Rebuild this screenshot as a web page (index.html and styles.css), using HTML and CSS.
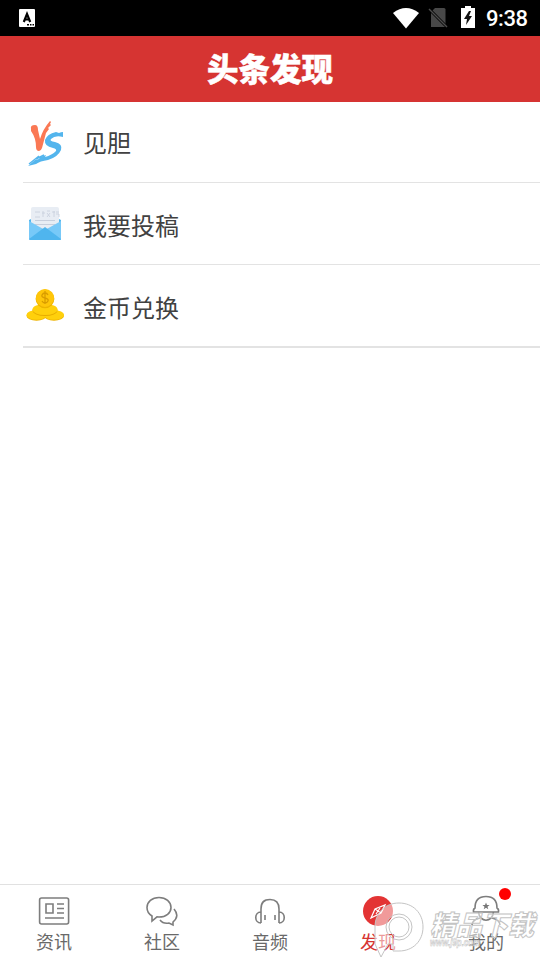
FILE: index.html
```html
<!DOCTYPE html>
<html lang="zh-CN">
<head>
<meta charset="utf-8">
<title>头条发现</title>
<link rel="stylesheet" href="styles.css">
</head>
<body>
<div class="app">
  <div class="status">
    <svg class="keyboard" width="16" height="18" viewBox="0 0 16 18"><rect width="16" height="18" rx="1" fill="#fff"/><path d="M4.800 13 8 5l3.200 8M6 10.500h4" fill="none" stroke="#000" stroke-width="2.200"/><path d="M8 15h2v1.500H8zm3 0h1.500v1.500H11zm2.500 0H15v1.500h-1.500z"/></svg>
    <div class="status-icons">
      <svg class="wifi" width="26" height="21" viewBox="0 0 26 21"><path d="M0 5Q13-5 26 5L13 20.500z" fill="#fff"/></svg>
      <svg class="nosim" width="20" height="22" viewBox="0 0 20 22"><path d="M7 1h9q1.500 0 1.500 1.500V20H3V5z" fill="#484848"/><path d="m1 2 18 18" stroke="#000" stroke-width="3"/><path d="m1 2 18 18" stroke="#4d4d4d" stroke-width="1.500"/></svg>
      <svg class="battery" width="14" height="22" viewBox="0 0 14 22"><path d="M4 0h6v2h4v20H0V2h4z" fill="#fff"/><path d="M8 5 3 13h3l-1 6 6-9H8l2-5z" fill="#111"/></svg>
      <span class="clock">9:38</span>
    </div>
  </div>
  <header class="header"><h1>头条发现</h1></header>
  <main class="list">
    <div class="row">
      <svg width="38" height="46" viewBox="0 0 38 46"><path d="M5 9Q4 5 9 5q3 0 3 5l2 9Q17 9 24 1l1 1-1 2 1 1-3 3 1 1-3 4-4 15q-1 3-3 3-3 0-3-4Q10 18 5 11z" fill="#fa7854"/><path d="M37 12v5q-8-2-12 2-2 2 4 3 8 2 6 8-3 7-13 10-8 1-12 4l-8 2 7-6 4-1 1-2 6-2-1 2q7-2 11-6 1-2-3-3-9-2-8-8 2-6 11-8l3 1q2-1 4-1z" fill="#53b5ed"/><path d="m3 44 10-8M10 39l8-4" stroke="#53b5ed" stroke-width="1.500"/></svg>
      <span>见胆</span>
    </div>
    <div class="row second">
      <svg width="38" height="46" viewBox="0 0 38 46"><path d="m3 17 16-8 16 8v10H3z" fill="#55b7ed"/><path d="M5 6q0-2 2-2h24q2 0 2 2v23H5z" fill="#e8edf4"/><path d="M9 9h5m-5 5h5m3-6v6m-1-4h3m2 0 3 4m0-4-3 4m0-6h3m2 1h3m-1-1v6m2-5h3m-3 2h3v3" stroke="#c7cedc" stroke-width=".8" fill="none"/><path d="M9 17.500h20M9 21.500h20" stroke="#c7cedc"/><path d="m3 18 16 9 16-9v18q0 1-1 1H4q-1 0-1-1z" fill="#78c9f8"/><path d="m3 36 16-12 16 12q0 1-1 1H4z" fill="#4fb5ee"/></svg>
      <span>我要投稿</span>
    </div>
    <div class="row last">
      <svg width="38" height="46" viewBox="0 0 38 46"><g fill="#edb300"><ellipse cx="10.500" cy="30.800" rx="10" ry="5"/><ellipse cx="28" cy="30.800" rx="10" ry="5"/></g><g fill="#ffd00c"><ellipse cx="10.500" cy="30" rx="10" ry="4.800"/><ellipse cx="28" cy="30" rx="10" ry="4.800"/></g><ellipse cx="19" cy="25.500" rx="12.500" ry="5.500" fill="#e8ad00"/><ellipse cx="19" cy="24.500" rx="12.500" ry="5.500" fill="#ffd00c"/><circle cx="19" cy="13.800" r="9.400" fill="#edb300"/><circle cx="19" cy="13" r="9" fill="#ffc60a"/><path d="M22 10q-1-2-3-2t-3 2 3 3 3 3-3 2-3-2M19 6v13" fill="none" stroke="#d99c00" stroke-width="1.300"/></svg>
      <span>金币兑换</span>
    </div>
  </main>
  <nav class="tabs">
    <div class="tab">
      <svg width="32" height="32" viewBox="0 0 32 32"><rect x="1.600" y="3" width="29" height="26" rx="2"/><path d="M8 9h7v9H8zm11 0h7m-7 4.500h7M19 18h7M7 23h19"/></svg>
      <span>资讯</span>
    </div>
    <div class="tab">
      <svg width="32" height="32" viewBox="0 0 32 32"><path d="M6 26v-5Q1 18 1 12.500C1 7 6 2.500 13 2.500S25 7 25 12.500s-5 9.500-12 9.500l-2-.2zM28 14q6 7-1 13v3l-4-2q-6 1-9-3"/></svg>
      <span>社区</span>
    </div>
    <div class="tab">
      <svg width="32" height="32" viewBox="0 0 32 32"><path d="M7 28V14C7 7 10 4.500 16 4.500S25 7 25 14v14M7 17c-7 0-7 11 0 11M25 17c7 0 7 11 0 11M11 20v5m10-5v5"/></svg>
      <span>音频</span>
    </div>
    <div class="tab active">
      <svg width="32" height="32" viewBox="0 0 32 32"><circle cx="16" cy="16" r="15" fill="#e33434" stroke="none"/><path d="m23 10-4 8-10 5 4-9zM13 14l6 4m-1-5-4 6" stroke="#fff" stroke-width="1.200"/></svg>
      <span>发现</span>
    </div>
    <div class="tab">
      <svg width="32" height="32" viewBox="0 0 32 32"><path d="M5 13C5 5 9 1.500 16 1.500S27 5 27 13q2 1 1.500 4h-25Q3 14 5 13zM8.500 17c1 11 14 11 15 0M2 30q0-5 8-7m12 0q8 2 8 7"/><path class="star" d="m16 7.500 1 2.600h2.600l-2.100 1.600.8 2.600-2.300-1.600-2.300 1.600.8-2.600-2.100-1.600H15z"/></svg>
      <span>我的</span>
      <i class="badge"></i>
    </div>
  </nav>
  <div class="watermark">
    <svg width="168" height="60" viewBox="0 0 168 60"><g fill="#fff" fill-opacity=".5" stroke="#c4c4c4"><path fill-rule="evenodd" d="M3 28C3 14 13 4 27 4s24 10 24 24-10 24-24 24h-6v-7h-5l-7 13-6-13zM14 28a13 13 0 1 0 26 0 13 13 0 0 0-26 0z"/><circle cx="27" cy="28" r="10" fill="none"/></g><text class="mark-name" x="58" y="36" textLength="104" lengthAdjust="spacingAndGlyphs">精品下载</text><text class="mark-url" x="58" y="47" textLength="50" lengthAdjust="spacingAndGlyphs">www.j9p.com</text></svg>
  </div>
</div>
</body>
</html>
```

FILE: styles.css
```css
* { box-sizing: border-box; }
body { margin: 0; background: #fff; font-family: "Noto Sans CJK SC", sans-serif; }
svg { display: block; flex: none; }
.app { position: relative; width: 540px; height: 960px; display: flex; flex-direction: column; overflow: hidden; }
.status { height: 36px; flex: none; background: #000; display: flex; align-items: center; justify-content: space-between; padding: 0 12px 0 19px; }
.status-icons { display: flex; align-items: center; }
.nosim { margin-left: 9px; }
.battery { margin-left: 13px; margin-bottom: 2px; }
.clock { margin-left: 11px; color: #fff; font: 500 22px/36px Roboto, sans-serif; width: 42px; white-space: nowrap; letter-spacing: -.4px; padding-top: 1px; }
.header { height: 66px; flex: none; background: #d63432; display: flex; align-items: center; justify-content: center; }
.header h1 { margin: 0; padding-bottom: 4px; color: #fff; font-size: 31.500px; line-height: 60px; font-weight: 900; white-space: nowrap; -webkit-text-stroke: .5px #fff; }
.list { flex: 1; padding-left: 23px; }
.row { height: 82px; display: flex; align-items: center; gap: 19px; padding: 2px 0 0 3px; border-bottom: 1px solid #e3e3e3; color: #414141; font-size: 24px; line-height: 36px; }
.row:first-child { height: 81px; }
.row:first-child span { padding-bottom: 3px; }
.row.second svg { margin-top: 2px; }
.row.last { height: 83px; border-bottom: 2px solid #e3e3e3; }
.row.last svg { margin-top: 3px; }
.row.second span { padding-bottom: 0; }
.row span { padding-bottom: 1px; }
.row.last span { padding-bottom: 0; }
.tabs { height: 76px; flex: none; display: flex; border-top: 1px solid #e1e1e1; }
.tab { position: relative; width: 108px; display: flex; flex-direction: column; align-items: center; padding-top: 10px; gap: 1px; color: #696969; font-size: 18px; line-height: 27px; }
.tab svg { fill: none; stroke: #7d7d7d; stroke-width: 1.6; }
.tab .star { fill: #777; stroke: none; }
.tab.active { color: #d63432; }
.badge { position: absolute; width: 12px; height: 12px; border-radius: 50%; background: #f00; left: 67px; top: 3px; }
.watermark { position: absolute; left: 372px; top: 899px; }
.mark-name { font: italic 900 27px "Noto Sans CJK SC", sans-serif; fill: rgba(255,255,255,.5); stroke: #c4c4c4; stroke-width: 1; }
.mark-url { font: italic bold 11px "Liberation Sans", sans-serif; fill: rgba(255,255,255,.6); stroke: #c4c4c4; stroke-width: .6; }
```
